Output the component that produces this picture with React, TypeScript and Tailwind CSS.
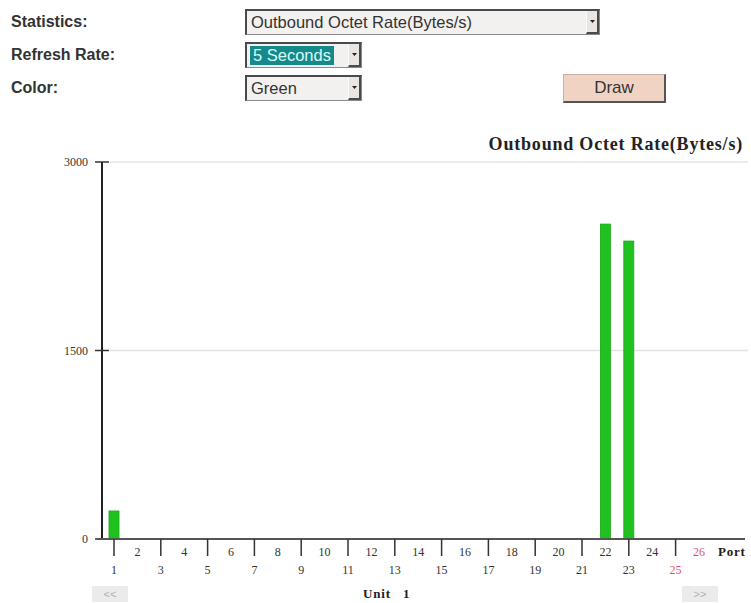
import React from 'react';

const values: Record<number, number> = { 1: 223, 22: 2506, 23: 2371 };
const ports = Array.from({ length: 26 }, (_, i) => i + 1);

// chart geometry (svg coords)
const top = 7;
const base = 384;
const max = 3000;
const portX = (n: number) => 114 + (n - 1) * 23.4;
const valY = (v: number) => base - (v / max) * (base - top);

const Select = ({
  width,
  label,
  active = false,
}: {
  width: string;
  label: string;
  active?: boolean;
}) => (
  <div
    className={`${width} h-[26px] flex bg-[#f3f1ef] border border-[#8a8a8a] border-t-2 border-l-2 border-t-[#4a4a4a] border-l-[#4a4a4a]`}
  >
    <div className="flex-1 flex items-center pl-[3px] pr-[1px] py-[2px]">
      <span
        className={`h-full flex items-center text-[16.5px] leading-none ${
          active ? 'bg-[#168a8a] text-[#d6fbfb] px-[3px]' : 'text-[#333] px-[1px]'
        }`}
      >
        {label}
      </span>
    </div>
    <div className="w-[13px] flex items-center justify-center bg-[#e9e5e1] border-l border-l-[#fafafa] border-r-2 border-r-[#4a4a4a] border-b-2 border-b-[#4a4a4a]">
      <svg width="5" height="3" viewBox="0 0 5 3">
        <path d="M0 0h5L2.5 3z" fill="#222" />
      </svg>
    </div>
  </div>
);

const Chart = () => (
  <svg width="751" height="425" viewBox="0 0 751 425" className="block">
    {/* grid */}
    <line x1="110" y1={top} x2="748" y2={top} stroke="#e4e4e4" strokeWidth="1.5" />
    <line x1="110" y1={valY(1500)} x2="748" y2={valY(1500)} stroke="#e4e4e4" strokeWidth="1.5" />

    {/* y axis */}
    <line x1="102" y1={top} x2="102" y2={base} stroke="#222" strokeWidth="2" />
    {[3000, 1500, 0].map((v) => (
      <g key={v}>
        <line x1="95" y1={valY(v)} x2="109" y2={valY(v)} stroke="#333" strokeWidth="1.5" />
        <text
          x="88"
          y={valY(v) + 4}
          textAnchor="end"
          fontFamily="'Liberation Serif', serif"
          fontSize="12"
          fill="#333"
        >
          {v}
        </text>
      </g>
    ))}

    {/* bars */}
    {ports.map((n) =>
      values[n] ? (
        <rect
          key={n}
          x={portX(n) - 5}
          y={valY(values[n])}
          width="10"
          height={base - valY(values[n])}
          fill="#1fc21f"
          stroke="#17a617"
          strokeWidth="0.8"
        />
      ) : null
    )}

    {/* x axis */}
    <line x1="97" y1={base} x2="745" y2={base} stroke="#555" strokeWidth="2" />
    {ports.map((n) => {
      const odd = n % 2 === 1;
      const red = n >= 25;
      return (
        <g key={n}>
          {odd && <line x1={portX(n)} y1={base} x2={portX(n)} y2={base + 17} stroke="#333" strokeWidth="1.5" />}
          <text
            x={portX(n)}
            y={odd ? base + 35 : base + 17}
            textAnchor="middle"
            fontFamily="'Liberation Serif', serif"
            fontSize="12"
            fill={red ? '#e0506e' : '#333'}
          >
            {n}
          </text>
        </g>
      );
    })}
    <text
      x="718"
      y={base + 17}
      fontFamily="'Liberation Serif', serif"
      fontSize="13"
      fontWeight="bold"
      letterSpacing="0.8"
      fill="#222"
    >
      Port
    </text>
  </svg>
);

export default function App() {
  return (
    <div className="w-[751px] h-[603px] bg-white overflow-hidden font-['Liberation_Sans',Arial,sans-serif]">
      {/* form */}
      <div className="pt-[9px] pl-[11px] flex flex-col gap-[7px]">
        <div className="h-[26px] flex items-center">
          <div className="w-[234px] text-[16px] font-bold text-[#333]">Statistics:</div>
          <Select width="w-[355px]" label="Outbound Octet Rate(Bytes/s)" />
        </div>
        <div className="h-[26px] flex items-center">
          <div className="w-[234px] text-[16px] font-bold text-[#333]">Refresh Rate:</div>
          <Select width="w-[117px]" label="5 Seconds" active />
        </div>
        <div className="h-[26px] flex items-center">
          <div className="w-[234px] text-[16px] font-bold text-[#333]">Color:</div>
          <Select width="w-[117px]" label="Green" />
          <button className="ml-[201px] w-[103px] h-[29px] mt-[1px] bg-[#f1d3c4] text-[17px] text-[#333] border border-[#c9b2a6] border-r-2 border-b-2 border-r-[#555] border-b-[#555]">
            Draw
          </button>
        </div>
      </div>

      {/* chart title */}
      <div className="mt-[32px] pr-[8px] text-right font-['Liberation_Serif',serif] font-bold text-[18px] tracking-[0.8px] leading-[22px] text-[#222]">
        Outbound Octet Rate(Bytes/s)
      </div>

      <Chart />

      {/* unit navigation */}
      <div className="mt-[6px] flex items-center h-[16px]">
        <div className="ml-[92px] w-[36px] h-[16px] bg-[#ebebeb] text-[#b0b0b0] text-[11px] flex items-center justify-center">
          &lt;&lt;
        </div>
        <div className="ml-[235px] font-['Liberation_Serif',serif] font-bold text-[13px] tracking-[0.8px] text-[#222] whitespace-pre">
          Unit   1
        </div>
        <div className="ml-auto mr-[33px] w-[36px] h-[16px] bg-[#ebebeb] text-[#b0b0b0] text-[11px] flex items-center justify-center">
          &gt;&gt;
        </div>
      </div>
    </div>
  );
}
